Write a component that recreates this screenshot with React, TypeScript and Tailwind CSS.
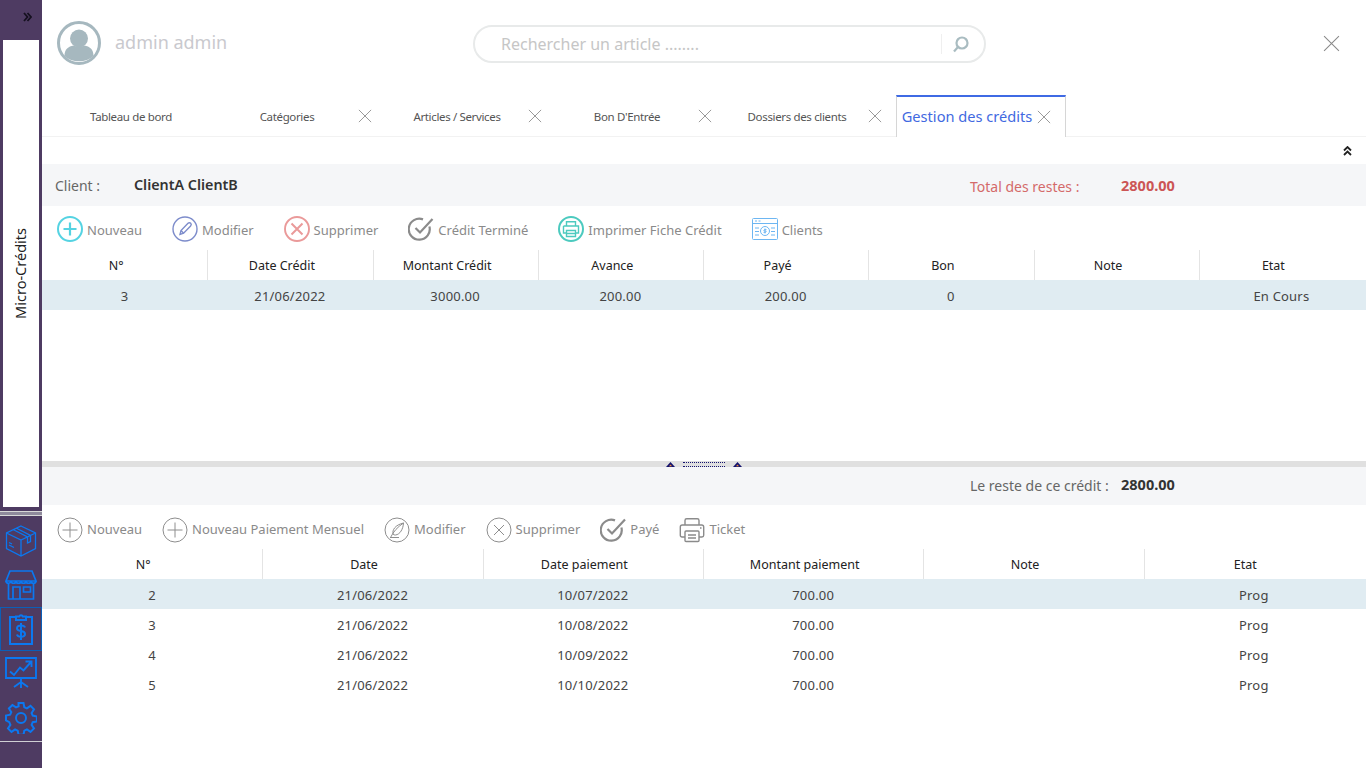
import type { ReactNode } from 'react'

const uiFont = "font-['Noto_Sans',sans-serif]"

const tabs = ['Tableau de bord', 'Catégories', 'Articles / Services', "Bon D'Entrée", 'Dossiers des clients']

const creditCols = ['N°', 'Date Crédit', 'Montant Crédit', 'Avance', 'Payé', 'Bon', 'Note', 'Etat']
const creditRow = ['3', '21/06/2022', '3000.00', '200.00', '200.00', '0', '', 'En Cours']

const payCols = ['N°', 'Date', 'Date paiement', 'Montant paiement', 'Note', 'Etat']
const payRows = [
  ['2', '21/06/2022', '10/07/2022', '700.00', '', 'Prog'],
  ['3', '21/06/2022', '10/08/2022', '700.00', '', 'Prog'],
  ['4', '21/06/2022', '10/09/2022', '700.00', '', 'Prog'],
  ['5', '21/06/2022', '10/10/2022', '700.00', '', 'Prog'],
]

function Cross({ size, color = '#8c8c8c', width = 1 }: { size: number; color?: string; width?: number }) {
  return (
    <svg width={size} height={size} viewBox="0 0 16 16" fill="none" stroke={color} strokeWidth={width}>
      <path d="M1 1l14 14M15 1L1 15" />
    </svg>
  )
}

function Ring({ color, width = 1.6, children }: { color: string; width?: number; children: ReactNode }) {
  return (
    <svg width="26" height="26" viewBox="0 0 26 26" fill="none" stroke={color} strokeWidth={width}>
      <circle cx="13" cy="13" r="12" />
      {children}
    </svg>
  )
}

const topIcons: Record<string, ReactNode> = {
  plus: (
    <Ring color="#55d3e2" width={2}>
      <path d="M13 6.500v13M6.500 13h13" strokeWidth="2.200" />
    </Ring>
  ),
  pencil: (
    <Ring color="#7d8ccb" width={1.4}>
      <path d="M8 18.500l1-4 7-7.200c.8-.8 2-.8 2.700 0s.6 1.900-.1 2.600L11.600 17.200z" />
      <path d="M9 14.500l2.600 2.700" />
    </Ring>
  ),
  cancel: (
    <Ring color="#ea9a9a" width={1.9}>
      <path d="M7.500 7.500l11 11M18.500 7.500l-11 11" strokeWidth="2" />
    </Ring>
  ),
  check: (
    <svg width="26" height="26" viewBox="0 0 26 26" fill="none" stroke="#8b8b8b" strokeWidth="2.200">
      <path d="M21.400 10.500A10.500 10.500 0 1 1 15 3.400" />
      <path d="M7.500 12l4.500 4.500L24.500 3" />
    </svg>
  ),
  print: (
    <Ring color="#4ccabf" width={2}>
      <path d="M8.500 10V5.800h9V10M5.500 10h15v7h-3M8.500 17h-3v-7M8.500 14.500h9v6h-9zM8.500 17.500h9" strokeWidth="1.400" />
    </Ring>
  ),
  clients: (
    <svg width="26" height="22" viewBox="0 0 26 22" fill="none" stroke="#6db6f2" strokeWidth="1">
      <rect x=".5" y=".5" width="25" height="21" rx="1" />
      <path d="M.5 5.500h25M3 3h2M6.500 3h2M3 10h4M3 13.500h4M3 17h4M19 10h4M19 13.500h4M19 17h4" />
      <circle cx="13" cy="13" r="4.500" />
      <path d="M13 10.500v5M14.500 11.700h-2.200a.8.800 0 0 0 0 1.300h1.400a.8.800 0 0 1 0 1.300h-2.200" />
    </svg>
  ),
}

const bottomIcons: Record<string, ReactNode> = {
  plus: (
    <Ring color="#8e8e8e" width={1}>
      <path d="M13 5.500v15M5.500 13h15" />
    </Ring>
  ),
  feather: (
    <Ring color="#8e8e8e" width={1}>
      <path d="M6.500 20.500c3-6 7-10.500 13-14.500M9 17c-.8-4 2-9 10.500-11-.3 6-3.500 11.500-8 12-1 .1-1.800-.2-2.500-1zM6 20.500h9" />
    </Ring>
  ),
  cancel: (
    <Ring color="#8e8e8e" width={1}>
      <path d="M8 8l10 10M18 8L8 18" />
    </Ring>
  ),
  check: (
    <svg width="26" height="26" viewBox="0 0 26 26" fill="none" stroke="#8b8b8b" strokeWidth="2.200">
      <path d="M21.400 10.500A10.500 10.500 0 1 1 15 3.400" />
      <path d="M7.500 12l4.500 4.500L25 2.500" />
    </svg>
  ),
  print: (
    <svg width="26" height="26" viewBox="0 0 26 26" fill="none" stroke="#8b8b8b" strokeWidth="1.400">
      <path d="M6 8V3.500c0-1 .7-1.700 1.700-1.700h10.600c1 0 1.700.7 1.700 1.700V8" />
      <path d="M6 20H3c-1 0-1.700-.7-1.700-1.700V10c0-1.200.8-2 2-2h19.400c1.200 0 2 .8 2 2v8.300c0 1-.7 1.700-1.700 1.700h-3" />
      <rect x="6" y="14" width="14" height="10.500" rx="1" />
      <path d="M9 18h8M9 21h8M21 11h1.500" />
    </svg>
  ),
}

function ToolButton({ icon, label, labelClass = '' }: { icon: ReactNode; label: string; labelClass?: string }) {
  return (
    <div className="flex items-center gap-1">
      <span className="flex h-[26px] w-[26px] items-center justify-center">{icon}</span>
      <span className={`text-[13px] text-[#8a8a8a] ${labelClass}`}>{label}</span>
    </div>
  )
}

function GridHead({ cols, gridClass, padClass }: { cols: string[]; gridClass: string; padClass: string }) {
  return (
    <div className={`grid h-[30px] ${gridClass}`}>
      {cols.map((c, i) => (
        <div
          key={c}
          className={`flex items-center justify-center pt-[2px] text-[12.500px] text-[#222] ${padClass} ${
            i > 0 ? 'border-l border-[#e4e4e4]' : ''
          }`}
        >
          {c}
        </div>
      ))}
    </div>
  )
}

function GridRow({ cells, gridClass, selected }: { cells: string[]; gridClass: string; selected?: boolean }) {
  return (
    <div className={`grid h-[30px] ${gridClass} ${selected ? 'bg-[#e0ecf2]' : ''}`}>
      {cells.map((c, i) => (
        <div key={i} className="flex items-center justify-center pt-[4px] text-[13px] tracking-[0.2px] text-[#444]">
          {c}
        </div>
      ))}
    </div>
  )
}

function BoxIcon() {
  return (
    <svg width="32" height="32" viewBox="0 0 32 32" fill="none" stroke="#0b78f0" strokeWidth="1.300">
      <path d="M16 1L30.500 8v15.500L16 31 1.500 23.500V8zM1.500 8L16 15l14.500-7M16 15v16M8 4.500L22.500 12v6l3-1.500v-6L11 3" />
      <path d="M4 20l5 2.500M4 17.500l3 1.500" />
    </svg>
  )
}

function ShopIcon() {
  return (
    <svg width="32" height="30" viewBox="0 0 32 30" fill="none" stroke="#0b78f0" strokeWidth="1.700">
      <path d="M5 1h22l4 10H1zM1 11c0 3 5 3 5 0 0 3 5 3 5 0 0 3 5 3 5 0 0 3 5 3 5 0 0 3 5 3 5 0 0 3 5 3 5 0" />
      <path d="M3.500 14v15h25V14M8 29V17h7v12M18.500 17h7v5h-7z" />
    </svg>
  )
}

function ClipboardIcon() {
  return (
    <svg width="26" height="32" viewBox="0 0 26 32" fill="none" stroke="#0b78f0" strokeWidth="2">
      <path d="M8 4H2v27h22V4h-6" />
      <path d="M8 7V3.500h3.200a1.900 1.900 0 0 1 3.600 0H18V7z" />
      <path d="M17 14.500c-.5-1.500-2-2-4-2-2.400 0-4 1-4 2.800s1.700 2.500 4 2.800 4 1 4 2.900-1.700 2.800-4 2.800c-2 0-3.600-.7-4-2.300M13 10v17" />
    </svg>
  )
}

function ChartIcon() {
  return (
    <svg width="32" height="32" viewBox="0 0 32 32" fill="none" stroke="#0b78f0" strokeWidth="1.900">
      <path d="M1 1h30v20H1zM5 14.500l4 3.500 6-7.500 3.500 3L26 5M20.500 4.500H26.500V10" />
      <path d="M16 21v10M16 25l-7 5M16 25l7 5" />
    </svg>
  )
}

function GearIcon() {
  return (
    <svg width="32" height="32" viewBox="0 0 32 32" fill="none" stroke="#0b78f0" strokeWidth="2">
      <circle cx="16" cy="16" r="5" />
      <path d="M13.500 1h5l.8 4.200 2.600 1.100 3.600-2.400 3.500 3.500-2.400 3.600 1.100 2.600 4.200.8v5l-4.200.8-1.100 2.600 2.400 3.600-3.500 3.500-3.600-2.400-2.600 1.100-.8 4.200h-5l-.8-4.200-2.600-1.100-3.600 2.400-3.500-3.500 2.400-3.600-1.100-2.600L1 18.500v-5l4.200-.8 1.100-2.600-2.400-3.600 3.500-3.500 3.600 2.400 2.600-1.100z" />
    </svg>
  )
}

function Sidebar() {
  return (
    <aside className="flex h-full w-[42px] shrink-0 flex-col bg-[#4e3b62]">
      <div className="flex h-[40px] items-start justify-end pr-[10px] pt-[12px]">
        <svg width="9" height="10" viewBox="0 0 9 10" fill="none" stroke="#15101f" strokeWidth="1.800">
          <path d="M1 1l3.500 4L1 9M4.500 1L8 5 4.500 9" />
        </svg>
      </div>
      <div className="mx-[3px] flex h-[467px] items-center justify-center bg-white">
        <span className="rotate-180 text-[14.500px] text-[#222] [writing-mode:vertical-rl]">Micro-Crédits</span>
      </div>
      <div className="mt-1 h-[5px] border-y border-[#d8d8d8] bg-[#8f8a9c]" />
      <div className="mt-[2px] flex h-[45px] items-center justify-center"><BoxIcon /></div>
      <div className="flex h-[44px] items-center justify-center"><ShopIcon /></div>
      <div className="flex h-[44px] items-center justify-center border border-[#0b5fb8]"><ClipboardIcon /></div>
      <div className="flex h-[44px] items-center justify-center"><ChartIcon /></div>
      <div className="flex h-[46px] items-center justify-center"><GearIcon /></div>
      <div className="h-px bg-[#cfcfd4]" />
    </aside>
  )
}

function Header() {
  return (
    <header className="flex h-[95px] items-start">
      <div className="ml-[15px] mt-[21px] flex items-center gap-[14px]">
        <svg width="44" height="44" viewBox="0 0 44 44">
          <circle cx="22" cy="22" r="20.500" fill="none" stroke="#a6b8bf" strokeWidth="3" />
          <circle cx="22" cy="17.500" r="9" fill="#a6b8bf" />
          <path d="M7.500 35c0-7 4-9.500 9-10.500 3 1.500 8 1.500 11 0 5 1 9 3.500 9 10.500-7 7-22 7-29 0z" fill="#a6b8bf" />
        </svg>
        <span className="w-[111px] whitespace-nowrap pb-[2px] text-[18px] text-[#c9c9ce]">admin admin</span>
      </div>
      <div className="ml-[247px] mt-[25px] flex h-[38px] w-[513px] items-center rounded-[19px] border-2 border-[#e8eaea] pl-[26px]">
        <span className="flex-1 text-[16px] text-[#c6c6c6]">Rechercher un article ........</span>
        <div className="flex h-[20px] w-[43px] items-center justify-center border-l border-[#efefef] pr-[4px]">
          <svg width="18" height="18" viewBox="0 0 18 18" fill="none" stroke="#a9bcc1" strokeWidth="2.200">
            <circle cx="10" cy="8" r="5.500" />
            <path d="M6 12l-4 4.500" />
          </svg>
        </div>
      </div>
      <div className="ml-auto mr-[26px] mt-[35px]">
        <Cross size={17} color="#8a8a8a" />
      </div>
    </header>
  )
}

function TabBar() {
  return (
    <nav className="flex h-[42px] border-b border-[#f2f2f2] pl-1">
      {tabs.map((t, i) => (
        <div key={t} className="flex w-[170px] items-center">
          <span className="flex-1 pt-[2px] text-center text-[11.500px] tracking-[-0.35px] text-[#555]">{t}</span>
          {i > 0 ? (
            <span className="flex w-[28px] justify-start">
              <Cross size={14} />
            </span>
          ) : null}
        </div>
      ))}
      <div className="flex h-[42px] w-[170px] items-center border-x border-t-2 border-x-[#d6d6d6] border-t-[#3f6ae4] bg-white">
        <span className="flex-1 text-center text-[14.600px] text-[#4169e1]">Gestion des crédits</span>
        <span className="flex w-[28px] justify-start">
          <Cross size={14} />
        </span>
      </div>
    </nav>
  )
}

function SplitHandle() {
  const triangle = (
    <svg width="9" height="5" viewBox="0 0 9 5">
      <path d="M4.500 0l4.500 5H0z" fill="#14146e" />
      <path d="M4.500 2.500l1.500 1.800H3z" fill="#f08a3c" />
    </svg>
  )
  return (
    <div className="flex h-[6px] items-center justify-center gap-[8px] bg-[#e0e0e0]">
      {triangle}
      <span className="h-[5px] w-[42px] border-y border-dotted border-[#14146e]" />
      {triangle}
    </div>
  )
}

export default function App() {
  return (
    <div className={`flex h-screen w-full overflow-hidden bg-white ${uiFont}`}>
      <Sidebar />
      <main className="flex min-w-0 flex-1 flex-col">
        <Header />
        <TabBar />

        <div className="flex h-[27px] items-center justify-end pr-[14px]">
          <svg width="9" height="10" viewBox="0 0 9 10" fill="none" stroke="#222" strokeWidth="1.800">
            <path d="M1 4.500L4.500 1 8 4.500M1 9l3.500-3.500L8 9" />
          </svg>
        </div>

        <div className="flex h-[42px] items-center bg-[#f5f6f8] pl-[13px]">
          <span className="w-[79px] text-[14px] text-[#666]">Client :</span>
          <span className="text-[14.300px] font-semibold text-[#333]">ClientA ClientB</span>
          <span className="ml-auto w-[151px] pt-[2px] text-[14px] text-[#d46a6a]">Total des restes :</span>
          <span className="mr-[189px] w-[56px] pt-[2px] text-[14.500px] font-bold text-[#cc5555]">2800.00</span>
        </div>

        <div className="flex h-[44px] items-center gap-[30px] pl-[15px] pt-[2px]">
          <ToolButton icon={topIcons.plus} label="Nouveau" labelClass="pt-[3px]" />
          <ToolButton icon={topIcons.pencil} label="Modifier" labelClass="pt-[3px]" />
          <ToolButton icon={topIcons.cancel} label="Supprimer" labelClass="pt-[3px]" />
          <ToolButton icon={topIcons.check} label="Crédit Terminé" labelClass="pt-[3px]" />
          <ToolButton icon={topIcons.print} label="Imprimer Fiche Crédit" labelClass="pt-[3px]" />
          <ToolButton icon={topIcons.clients} label="Clients" labelClass="pt-[3px]" />
        </div>

        <GridHead cols={creditCols} gridClass="grid-cols-8 pr-[2px]" padClass="pr-[17px]" />
        <GridRow cells={creditRow} gridClass="grid-cols-8 pr-[2px]" selected />
        <div className="h-[151px]" />

        <SplitHandle />

        <div className="flex h-[38px] items-center justify-end bg-[#f5f6f8]">
          <span className="w-[151px] pb-[2px] text-[14px] text-[#666]">Le reste de ce crédit :</span>
          <span className="mr-[189px] w-[56px] pb-[2px] text-[14.500px] font-bold text-[#333]">2800.00</span>
        </div>

        <div className="flex h-[44px] items-center gap-5 pl-[15px] pt-[6px]">
          <ToolButton icon={bottomIcons.plus} label="Nouveau" />
          <ToolButton icon={bottomIcons.plus} label="Nouveau Paiement Mensuel" />
          <ToolButton icon={bottomIcons.feather} label="Modifier" />
          <ToolButton icon={bottomIcons.cancel} label="Supprimer" />
          <ToolButton icon={bottomIcons.check} label="Payé" />
          <ToolButton icon={bottomIcons.print} label="Ticket" />
        </div>

        <GridHead cols={payCols} gridClass="grid-cols-6 pr-[2px]" padClass="pr-[18px]" />
        {payRows.map((r, i) => (
          <GridRow key={r[0]} cells={r} gridClass="grid-cols-6 pr-[2px]" selected={i === 0} />
        ))}
      </main>
    </div>
  )
}
